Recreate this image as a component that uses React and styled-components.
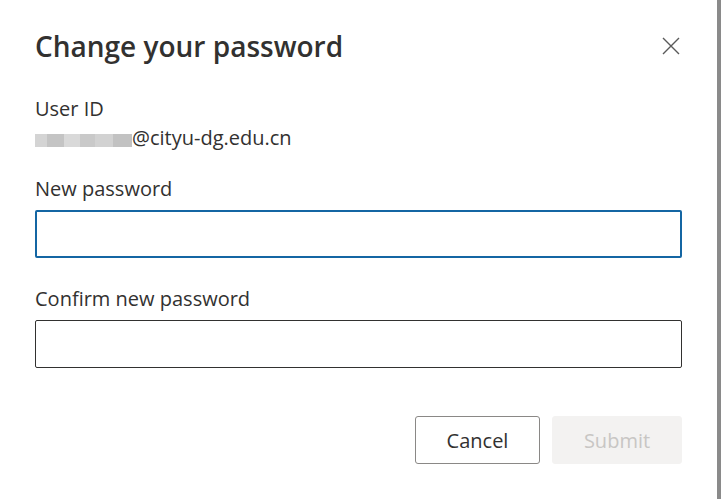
import React from "react";
import styled, { createGlobalStyle } from "styled-components";

const Global = createGlobalStyle`
  html, body { margin: 0; padding: 0; height: 100%; }
  body {
    background: #8a8a8a;
    font-family: "Open Sans", "Noto Sans", "Liberation Sans", sans-serif;
    color: #323130;
    overflow: hidden;
  }
`;

const Dialog = styled.div`
  box-sizing: border-box;
  width: 717px;
  height: 499px;
  background: #ffffff;
  padding: 0 35px;
  display: flex;
  flex-direction: column;
`;

const Header = styled.div`
  display: flex;
  align-items: center;
  justify-content: space-between;
  padding-top: 26px;
  height: 40px;
`;

const Title = styled.h1`
  margin: 0;
  font-size: 28px;
  line-height: 40px;
  font-weight: 600;
  color: #323130;
`;

const CloseButton = styled.button`
  border: none;
  background: none;
  padding: 0;
  width: 24px;
  height: 24px;
  display: flex;
  align-items: center;
  justify-content: center;
  margin-right: -1px;
  margin-top: -1px;
  cursor: pointer;
`;

const Field = styled.div`
  display: flex;
  flex-direction: column;
  margin-top: ${(p) => p.$top}px;
`;

const Label = styled.label`
  font-size: 20px;
  line-height: 28px;
  font-weight: 400;
  color: #323130;
`;

const Value = styled.div`
  font-size: 20px;
  line-height: 26px;
  font-weight: 400;
  color: #323130;
  display: flex;
  align-items: center;
  margin-top: 2px;
  margin-bottom: -2px;
`;

const Masked = styled.span`
  display: inline-block;
  width: 97px;
  height: 13px;
  margin-top: 4px;
  background: linear-gradient(
    90deg,
    #d4d4d4 0 12%,
    #c4c4c4 12% 30%,
    #d9d9d9 30% 46%,
    #c9c9c9 46% 62%,
    #d2d2d2 62% 80%,
    #c2c2c2 80% 100%
  );
`;

const Input = styled.input`
  box-sizing: border-box;
  width: 100%;
  height: 48px;
  margin-top: 7px;
  border-radius: 2px;
  border: ${(p) => (p.$focused ? "2px solid #1466a3" : "1px solid #323130")};
  background: #ffffff;
  outline: none;
  font-family: inherit;
  font-size: 20px;
  padding: 0 12px;
`;

const Footer = styled.div`
  display: flex;
  justify-content: flex-end;
  gap: 12px;
  margin-top: 48px;
`;

const Button = styled.button`
  box-sizing: border-box;
  height: 48px;
  min-width: ${(p) => p.$w}px;
  border-radius: 3px;
  font-family: inherit;
  font-size: 20px;
  font-weight: 400;
  border: ${(p) => (p.$disabled ? "1px solid #f3f2f1" : "1px solid #8a8886")};
  background: ${(p) => (p.$disabled ? "#f3f2f1" : "#ffffff")};
  color: ${(p) => (p.$disabled ? "#c8c6c4" : "#323130")};
  padding: 0 20px;
`;

export default function App() {
  return (
    <>
      <Global />
      <Dialog>
        <Header>
          <Title>Change your password</Title>
          <CloseButton aria-label="Close">
            <svg width="18" height="18" viewBox="0 0 18 18">
              <path d="M1 1 L17 17 M17 1 L1 17" stroke="#5a5a5a" strokeWidth="1.4" fill="none" />
            </svg>
          </CloseButton>
        </Header>
        <Field $top={29}>
          <Label>User ID</Label>
          <Value>
            <Masked />
            @cityu-dg.edu.cn
          </Value>
        </Field>
        <Field $top={26}>
          <Label>New password</Label>
          <Input type="password" $focused />
        </Field>
        <Field $top={27}>
          <Label>Confirm new password</Label>
          <Input type="password" />
        </Field>
        <Footer>
          <Button $w={125}>Cancel</Button>
          <Button $w={130} $disabled>Submit</Button>
        </Footer>
      </Dialog>
    </>
  );
}
